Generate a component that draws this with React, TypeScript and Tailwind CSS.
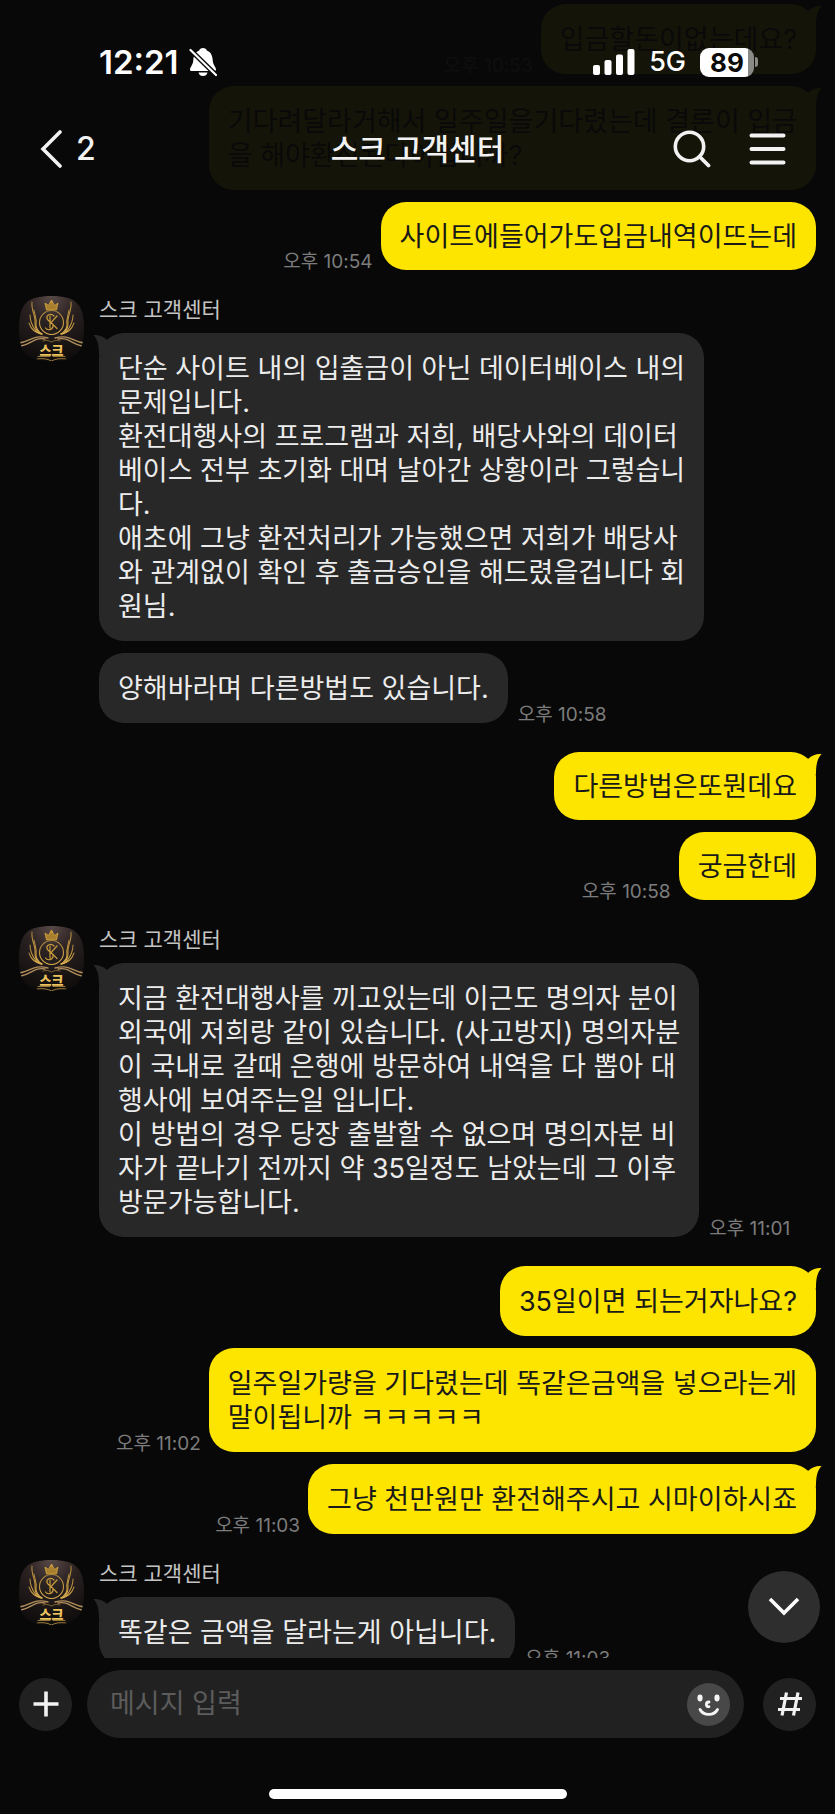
import { useState } from 'react';
import { clsx } from 'clsx';

interface Message {
  id: string;
  text: string;
  time?: string;
  tail?: boolean;
  compact?: boolean;
}

interface MessageGroup {
  id: string;
  from: 'me' | 'agent';
  messages: Message[];
}

const CONTACT = '스크 고객센터';

const GROUPS: MessageGroup[] = [
  {
    id: 'g1',
    from: 'me',
    messages: [
      { id: 'm1', text: '입금할돈이없는데요?', time: '오후 10:53', tail: true },
      {
        id: 'm2',
        text: '기다려달라거해서 일주일을기다렸는데 결론이 입금\n을 해야환전된다이겁니까?',
        tail: true,
      },
      { id: 'm3', text: '사이트에들어가도입금내역이뜨는데', time: '오후 10:54', compact: true },
    ],
  },
  {
    id: 'g2',
    from: 'agent',
    messages: [
      {
        id: 'm4',
        text: '단순 사이트 내의 입출금이 아닌 데이터베이스 내의\n문제입니다.\n환전대행사의 프로그램과 저희, 배당사와의 데이터\n베이스 전부 초기화 대며 날아간 상황이라 그렇습니\n다.\n애초에 그냥 환전처리가 가능했으면 저희가 배당사\n와 관계없이 확인 후 출금승인을 해드렸을겁니다 회\n원님.',
        tail: true,
      },
      { id: 'm5', text: '양해바라며 다른방법도 있습니다.', time: '오후 10:58' },
    ],
  },
  {
    id: 'g3',
    from: 'me',
    messages: [
      { id: 'm6', text: '다른방법은또뭔데요', tail: true, compact: true },
      { id: 'm7', text: '궁금한데', time: '오후 10:58', compact: true },
    ],
  },
  {
    id: 'g4',
    from: 'agent',
    messages: [
      {
        id: 'm8',
        text: '지금 환전대행사를 끼고있는데 이근도 명의자 분이\n외국에 저희랑 같이 있습니다. (사고방지) 명의자분\n이 국내로 갈때 은행에 방문하여 내역을 다 뽑아 대\n행사에 보여주는일 입니다.\n이 방법의 경우 당장 출발할 수 없으며 명의자분 비\n자가 끝나기 전까지 약 35일정도 남았는데 그 이후\n방문가능합니다.',
        time: '오후 11:01',
        tail: true,
      },
    ],
  },
  {
    id: 'g5',
    from: 'me',
    messages: [
      { id: 'm9', text: '35일이면 되는거자나요?', tail: true },
      {
        id: 'm10',
        text: '일주일가량을 기다렸는데 똑같은금액을 넣으라는게\n말이됩니까 ㅋㅋㅋㅋㅋ',
        time: '오후 11:02',
      },
      { id: 'm11', text: '그냥 천만원만 환전해주시고 시마이하시죠', time: '오후 11:03', tail: true },
    ],
  },
  {
    id: 'g6',
    from: 'agent',
    messages: [
      { id: 'm12', text: '똑같은 금액을 달라는게 아닙니다.', time: '오후 11:03', tail: true },
    ],
  },
];

function Avatar({ id }: { id: string }) {
  return (
    <svg viewBox="0 0 65 65" className="size-[65px] shrink-0" role="img" aria-label={CONTACT}>
      <defs>
        <radialGradient id={`${id}-bg`} cx="0.5" cy="0" r="1">
          <stop offset="0" stopColor="#594a48" />
          <stop offset="0.4" stopColor="#2a2121" />
          <stop offset="1" stopColor="#0f0c0c" />
        </radialGradient>
        <linearGradient id={`${id}-gold`} x1="0" y1="0" x2="0" y2="1">
          <stop offset="0" stopColor="#a5813c" />
          <stop offset="0.6" stopColor="#c69b42" />
          <stop offset="1" stopColor="#dcb052" />
        </linearGradient>
        <clipPath id={`${id}-clip`}>
          <path d="M32.500 0C57 0 65 8 65 32.500S57 65 32.500 65 0 57 0 32.500 8 0 32.500 0Z" />
        </clipPath>
      </defs>
      <g clipPath={`url(#${id}-clip)`}>
        <rect width="65" height="65" fill={`url(#${id}-bg)`} />
        <path
          d="m26 7 3.500 2.500L32.500 4l3 5.500L39 7l-1.500 7h-10ZM31 6h3"
          fill="#a87f2d"
          stroke="#d8a742"
          strokeWidth="0.800"
        />
        <g fill="none" stroke={`url(#${id}-gold)`} strokeLinecap="round" strokeWidth="1.100">
          <circle cx="32.500" cy="26.500" r="12" />
          <path d="M13 6c-1 9 4 14 3 21 0 6 2 9 6 11" />
          <path d="M15 14c1 6 3 9 2 15 0 4 3 7 6 9" />
          <path d="M11 19c0 7 3 12 6 16 2 2 4 3 6 3" />
          <path d="M10 27c2 6 6 10 13 11" />
          <path d="M52 6c1 9-4 14-3 21 0 6-2 9-6 11" />
          <path d="M50 14c-1 6-3 9-2 15 0 4-3 7-6 9" />
          <path d="M54 19c0 7-3 12-6 16-2 2-4 3-6 3" />
          <path d="M55 27c-2 6-6 10-13 11" />
          <path
            d="M0 47c11-1 14-9 29-5M2 50c11-2 13-9 24-7M65 47c-11-1-14-9-29-5M63 50c-11-2-13-9-24-7"
            stroke="#b08e5c"
            strokeWidth="1.300"
          />
          <path
            d="M24 45c4-1.500 6 0 8.500 1 2.500-1 4.500-2.500 8.500-1M19 60.500h12M34 60.500h12M18 63c6-1 11 0 14.500 2 3.500-2 8.500-3 14.500-2"
            strokeWidth="0.700"
          />
          <path
            d="M35 20c-3-3-8-1-7 2.500s7 4 6 8-6 4-7.500 1.500M31 20v12M38 20l-6 6.500 6 6"
            stroke="#c79b3c"
            strokeWidth="1.200"
          />
        </g>
        <text
          x="32.500"
          y="58.500"
          textAnchor="middle"
          fontSize="13"
          fill="#ecc35c"
          className="font-['Noto_Sans_CJK_KR',sans-serif] font-black"
        >
          스크
        </text>
      </g>
    </svg>
  );
}

function Tail({ mine }: { mine: boolean }) {
  return (
    <svg
      viewBox="0 0 20 22"
      aria-hidden="true"
      className={clsx(
        'absolute top-0 h-[22px] w-5',
        mine ? '-right-1.5 text-[#fee500]' : '-left-1.5 -scale-x-100 text-[#282828]',
      )}
    >
      <path d="M6 7C10 3 15 1.500 19.500 2 15 7 14 13 14 22L2 20Z" fill="currentColor" />
    </svg>
  );
}

function Bubble({ message, mine }: { message: Message; mine: boolean }) {
  return (
    <div className={clsx('flex items-end', mine ? 'flex-row-reverse gap-2' : 'gap-2.5')}>
      <div
        className={clsx(
          'relative rounded-[25px] px-[19px] text-[27px] leading-[34px] whitespace-pre',
          message.compact ? 'pt-[18px] pb-4' : 'pt-[19px] pb-[17px]',
          mine ? 'bg-[#fee500] text-[#191919]' : 'bg-[#282828] text-[#ececec]',
        )}
      >
        {message.tail && <Tail mine={mine} />}
        <p className="relative">{message.text}</p>
      </div>
      {message.time && (
        <time className="shrink-0 text-[19px] leading-4 text-[#7c7c7c]">{message.time}</time>
      )}
    </div>
  );
}

function Group({ group }: { group: MessageGroup }) {
  const mine = group.from === 'me';
  const bubbles = group.messages.map((m) => <Bubble key={m.id} message={m} mine={mine} />);

  if (mine) {
    return <section className="flex flex-col gap-3">{bubbles}</section>;
  }

  return (
    <section className="mt-[26px] mb-[29px] flex gap-[15px]">
      <Avatar id={group.id} />
      <div className="flex flex-col gap-3">
        <h2 className="-mb-3 h-[37px] text-[21px] leading-[28px] text-[#c4c4c4]">{CONTACT}</h2>
        {bubbles}
      </div>
    </section>
  );
}

function StatusBar() {
  return (
    <div className="flex items-center justify-between pr-[77px] pl-[99px] text-white">
      <div className="flex items-center gap-2.5">
        <span className="text-[33px] leading-[40px] font-semibold">12:21</span>
        <svg viewBox="0 0 28 30" className="h-[30px] w-7" aria-hidden="true">
          <path
            d="M14 1c2 0 3.500 1.200 3.800 2.500C22 5 23.500 9 23.700 13c.2 5 3.300 7 3.300 9.500 0 1.200-.8 1.500-2 1.500H3c-1.200 0-2-.3-2-1.500C1 20 4.100 18 4.300 13c.2-4 1.700-8 5.900-9.500C10.500 2.200 12 1 14 1ZM9.500 25.500h9c-.5 2.500-2.300 3.500-4.500 3.500s-4-1-4.500-3.500Z"
            fill="#fff"
          />
          <path d="M2 3.500 26.500 27.500" stroke="#080808" strokeWidth="4.800" />
          <path d="M1.500 3 27 28" stroke="#fff" strokeWidth="2.200" strokeLinecap="round" />
        </svg>
      </div>
      <div className="flex items-center">
        <svg viewBox="0 0 42 26" className="mr-[14px] h-[26px] w-[42px]" aria-hidden="true" fill="#fff">
          <rect x="0" y="16" width="7" height="10" rx="2" />
          <rect x="11.500" y="11" width="7" height="15" rx="2" />
          <rect x="23" y="5.500" width="7" height="20.500" rx="2" />
          <rect x="34.500" y="0" width="7" height="26" rx="2" />
        </svg>
        <span className="mr-[14px] text-[27px] leading-[40px] font-medium">5G</span>
        <div className="flex items-center gap-px">
          <div className="flex h-[29px] w-[54px] items-center justify-center rounded-[9px] bg-[linear-gradient(90deg,#fff_88%,#8a8a86_88%)] text-[26px] leading-[29px] font-bold text-[#0a0a0a]">
            89
          </div>
          <span className="h-[10px] w-[3px] rounded-r-full bg-[#8a8a86]" />
        </div>
      </div>
    </div>
  );
}

function ChatHeader() {
  return (
    <header className="absolute inset-x-0 top-0 z-10 bg-[#080808]/95 pt-[42px] pb-5">
      <StatusBar />
      <nav className="mt-[45px] grid grid-cols-[1fr_auto_1fr] items-center px-[39px] text-[#f2f2f2]">
        <button type="button" aria-label="뒤로" className="flex items-center gap-[13px] justify-self-start">
          <svg viewBox="0 0 24 38" className="h-[38px] w-6" fill="none" aria-hidden="true">
            <path d="M21 2 4 19l17 17" stroke="currentColor" strokeWidth="3.600" strokeLinecap="round" />
          </svg>
          <span className="text-[32px] leading-[44px] font-medium">2</span>
        </button>
        <h1 className="text-[30px] leading-[44px] font-medium">{CONTACT}</h1>
        <div className="mr-[10px] flex items-center gap-[38px] justify-self-end">
          <button type="button" aria-label="검색">
            <svg viewBox="0 0 38 38" className="block size-[38px]" fill="none" aria-hidden="true">
              <circle cx="16.500" cy="16.500" r="14.200" stroke="currentColor" strokeWidth="3.600" />
              <path d="m26.500 26.500 9 9" stroke="currentColor" strokeWidth="3.800" strokeLinecap="round" />
            </svg>
          </button>
          <button type="button" aria-label="메뉴">
            <svg viewBox="0 0 37 38" className="block h-[38px] w-[37px]" aria-hidden="true">
              <path
                d="M2.500 5.500h32M2.500 19h32M2.500 32.500h32"
                stroke="currentColor"
                strokeWidth="4"
                strokeLinecap="round"
              />
            </svg>
          </button>
        </div>
      </nav>
    </header>
  );
}

function Composer() {
  const [draft, setDraft] = useState('');

  return (
    <footer className="bg-[#080808] px-[19px] pt-3 pb-[15px]">
      <form className="flex items-center" onSubmit={(e) => e.preventDefault()}>
        <button
          type="button"
          aria-label="첨부"
          className="flex size-[53px] shrink-0 items-center justify-center rounded-full bg-[#212121]"
        >
          <svg viewBox="0 0 26 26" className="size-[26px]" aria-hidden="true">
            <path d="M13 .5v25M.5 13h25" stroke="#f2f2f2" strokeWidth="3.600" />
          </svg>
        </button>
        <div className="mr-[19px] ml-[15px] flex h-[68px] flex-1 items-center rounded-full bg-[#212121] pr-[14px] pl-[23px]">
          <input
            type="text"
            aria-label="메시지 입력"
            placeholder="메시지 입력"
            value={draft}
            onChange={(e) => setDraft(e.target.value)}
            className="min-w-0 flex-1 bg-transparent text-[27px] leading-[34px] text-[#ececec] outline-none placeholder:text-[#5c5c5c]"
          />
          <button type="button" aria-label="이모티콘" className="shrink-0">
            <svg viewBox="0 0 43 43" className="block size-[43px]" aria-hidden="true">
              <circle cx="21.500" cy="21.500" r="21.500" fill="#484848" />
              <ellipse cx="13" cy="15" rx="2.600" ry="3.400" fill="#f5f5f5" />
              <ellipse cx="30" cy="15" rx="2.600" ry="3.400" fill="#f5f5f5" />
              <path
                d="M22 19c-3.500.3-3.500 4.500 0 4.700M13 26.500c3.500 6.500 14 6.500 17.500 0"
                fill="none"
                stroke="#f5f5f5"
                strokeWidth="2.800"
                strokeLinecap="round"
              />
            </svg>
          </button>
        </div>
        <button
          type="button"
          aria-label="샵 검색"
          className="flex size-[53px] shrink-0 items-center justify-center rounded-full bg-[#212121]"
        >
          <svg viewBox="0 0 26 26" className="size-[26px]" fill="none" aria-hidden="true">
            <path
              d="M9.500 1.500 5 24.500M21 1.500l-4.500 23M3 7.500h22M1 18.500h22"
              stroke="#f2f2f2"
              strokeWidth="3.200"
            />
          </svg>
        </button>
      </form>
      <div className="mx-auto mt-[51px] h-[10px] w-[298px] rounded-full bg-white" />
    </footer>
  );
}

export default function App() {
  return (
    <div className="relative flex h-screen flex-col overflow-hidden bg-[#080808] font-['Inter','Noto_Sans_CJK_KR',sans-serif]">
      <ChatHeader />
      <main className="relative min-h-0 flex-1 overflow-hidden px-[19px] pt-1">
        {GROUPS.map((group) => (
          <Group key={group.id} group={group} />
        ))}
        <button
          type="button"
          aria-label="맨 아래로"
          className="absolute right-[15px] bottom-[15px] flex size-[72px] items-center justify-center rounded-full bg-[#2e2e2e]"
        >
          <svg viewBox="0 0 32 20" className="h-5 w-8" fill="none" aria-hidden="true">
            <path d="m2 2 14 14L30 2" stroke="#fff" strokeWidth="3.600" />
          </svg>
        </button>
      </main>
      <Composer />
    </div>
  );
}
